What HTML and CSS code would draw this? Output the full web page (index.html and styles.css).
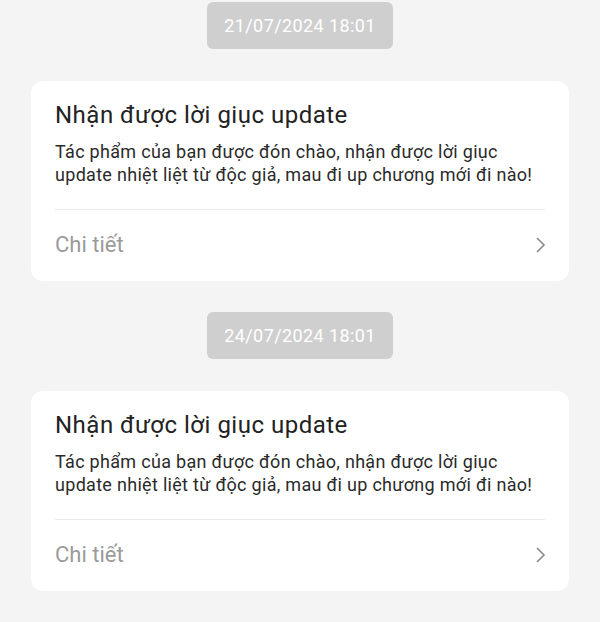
FILE: index.html
```html
<!DOCTYPE html>
<html>
    <head>
        <meta charset="utf-8">
        <link rel="stylesheet" href="styles.css">
    </head>
    <body>
        <div class="feed">
            <div class="item">
                <div class="stamp">21/07/2024 18:01</div>
                <div class="card">
                    <div class="card-title">Nhận được lời giục update</div>
                    <div class="card-text">Tác phẩm của bạn được đón chào, nhận được lời giục update nhiệt liệt từ độc giả, mau đi up chương mới đi nào!</div>
                    <div class="card-foot">
                        <span>Chi tiết</span>
                        <svg width="12" height="18" viewBox="0 0 12 18"><path d="M3 2 L10 9 L3 16" fill="none" stroke="#8a8a8a" stroke-width="1.6"/></svg>
                    </div>
                </div>
            </div>
            <div class="item">
                <div class="stamp">24/07/2024 18:01</div>
                <div class="card">
                    <div class="card-title">Nhận được lời giục update</div>
                    <div class="card-text">Tác phẩm của bạn được đón chào, nhận được lời giục update nhiệt liệt từ độc giả, mau đi up chương mới đi nào!</div>
                    <div class="card-foot">
                        <span>Chi tiết</span>
                        <svg width="12" height="18" viewBox="0 0 12 18"><path d="M3 2 L10 9 L3 16" fill="none" stroke="#8a8a8a" stroke-width="1.6"/></svg>
                    </div>
                </div>
            </div>
        </div>
    </body>
</html>
```

FILE: styles.css
```css
*{
    margin: 0;
    padding: 0;
    box-sizing: border-box;
    font-family: Roboto, 'Noto Sans', sans-serif;
}
body{
    background: #f4f4f4;
    width: 600px;
    height: 622px;
    overflow: hidden;
}
.feed{
    padding-top: 2px;
    display: flex;
    flex-direction: column;
    gap: 31px;
}
.item{
    display: flex;
    flex-direction: column;
    align-items: center;
    gap: 32px;
}
.stamp{
    width: 186px;
    height: 47px;
    line-height: 47px;
    text-align: center;
    background: #cfcfcf;
    color: #fff;
    font-size: 18px;
    letter-spacing: 0.4px;
    border-radius: 6px;
}
.card{
    width: 538px;
    height: 200px;
    background: #fff;
    border-radius: 12px;
    padding: 18px 24px 0;
}
.card-title{
    font-size: 24px;
    line-height: 32px;
    letter-spacing: 0.5px;
    color: #222;
}
.card-text{
    margin-top: 9px;
    font-size: 18px;
    line-height: 23px;
    letter-spacing: 0.3px;
    color: #2a2a2a;
}
.card-foot{
    margin-top: 23px;
    border-top: 1px solid #ebebeb;
    height: 70px;
    display: flex;
    align-items: center;
    justify-content: space-between;
    font-size: 22px;
    color: #9a9a9a;
}
.card-foot svg{
    margin-right: -1px;
}
```
